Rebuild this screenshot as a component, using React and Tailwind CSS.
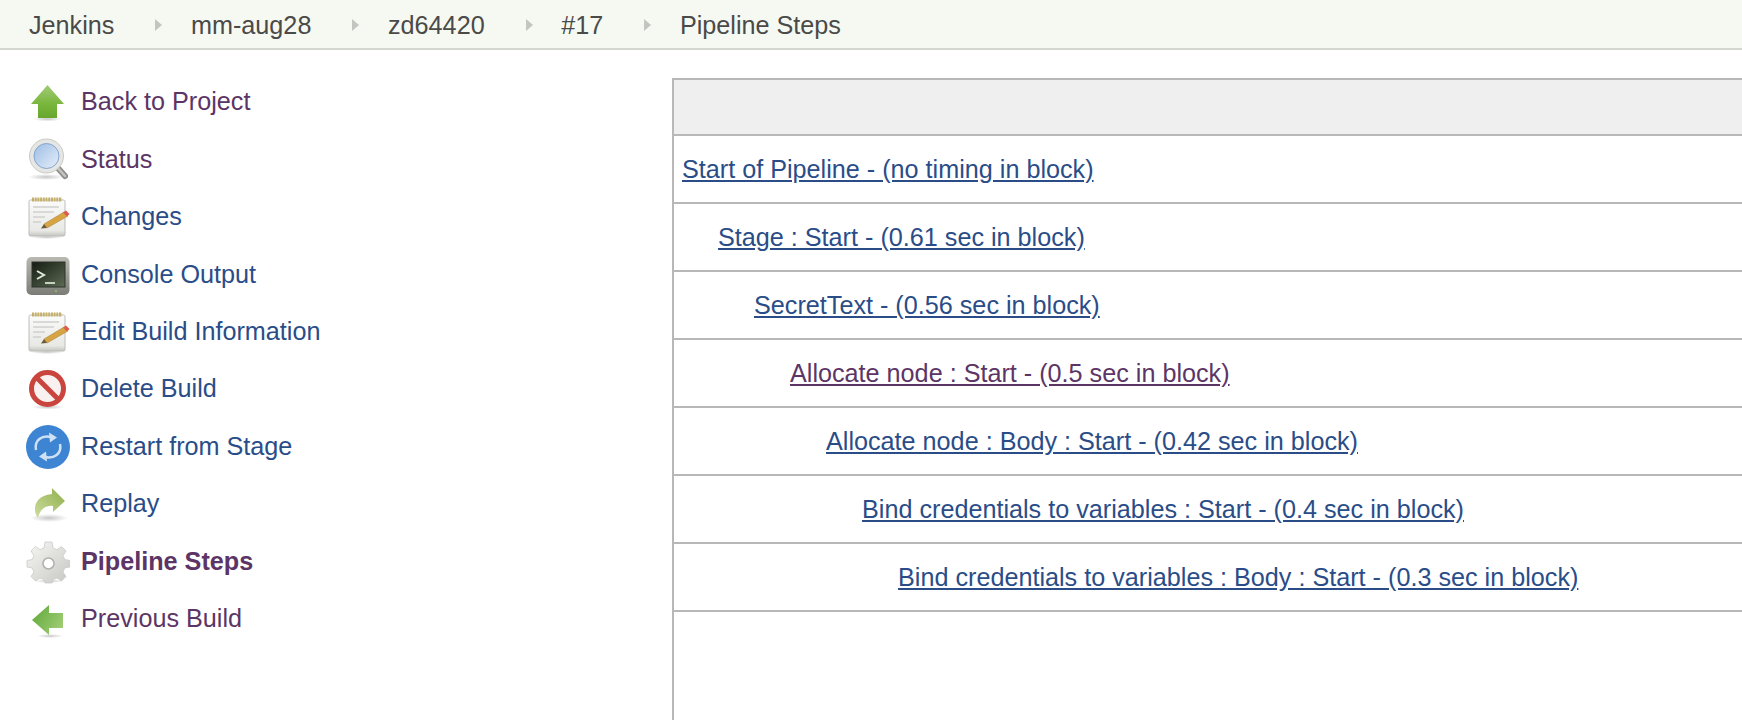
const crumbs = ['Jenkins', 'mm-aug28', 'zd64420', '#17', 'Pipeline Steps']

function Shadow({ cx = 22, cy = 39, rx = 15, ry = 3 }) {
    return <ellipse cx={cx} cy={cy} rx={rx} ry={ry} fill="url(#shadow)" />
}

function Defs() {
    return (
        <svg width="0" height="0" className="absolute">
            <defs>
                <radialGradient id="shadow">
                    <stop offset="0" stopColor="#000" stopOpacity="0.22" />
                    <stop offset="1" stopColor="#000" stopOpacity="0" />
                </radialGradient>
                <linearGradient id="greenUp" x1="0" y1="0" x2="0" y2="1">
                    <stop offset="0" stopColor="#a2cb78" />
                    <stop offset="0.6" stopColor="#78b53b" />
                    <stop offset="1" stopColor="#69a62f" />
                </linearGradient>
                <linearGradient id="greenLeft" x1="0" y1="0" x2="1" y2="0.6">
                    <stop offset="0" stopColor="#5da636" />
                    <stop offset="1" stopColor="#9ccb72" />
                </linearGradient>
                <linearGradient id="lens" x1="0" y1="0" x2="1" y2="1">
                    <stop offset="0" stopColor="#9dbde4" />
                    <stop offset="1" stopColor="#e6effa" />
                </linearGradient>
                <linearGradient id="paper" x1="0" y1="0" x2="0" y2="1">
                    <stop offset="0" stopColor="#fbfbfb" />
                    <stop offset="0.85" stopColor="#e8e8e5" />
                    <stop offset="1" stopColor="#c4c4c0" />
                </linearGradient>
                <linearGradient id="screen" x1="0" y1="0" x2="1" y2="1">
                    <stop offset="0" stopColor="#141c12" />
                    <stop offset="1" stopColor="#5d6b53" />
                </linearGradient>
                <linearGradient id="frame" x1="0" y1="0" x2="0" y2="1">
                    <stop offset="0" stopColor="#b9b9b2" />
                    <stop offset="1" stopColor="#7b7c75" />
                </linearGradient>
                <linearGradient id="replay" x1="0" y1="1" x2="1" y2="0">
                    <stop offset="0" stopColor="#cddd9d" />
                    <stop offset="1" stopColor="#8fae4a" />
                </linearGradient>
                <linearGradient id="gear" x1="0" y1="0" x2="1" y2="1">
                    <stop offset="0" stopColor="#f7f7f5" />
                    <stop offset="1" stopColor="#c6c6c2" />
                </linearGradient>
            </defs>
        </svg>
    )
}

function Icon({ children }) {
    return (
        <svg viewBox="0 0 44 44" className="w-[44px] h-[44px] shrink-0 blur-[0.6px]">
            {children}
        </svg>
    )
}

const ArrowUp = () => (
    <Icon>
        <Shadow cx={21.500} cy={39} rx={14} ry={2.500} />
        <path d="M21.500 5 L38 24 L31 24 L31 38 L12 38 L12 24 L5 24 Z" fill="url(#greenUp)" />
    </Icon>
)

const Search = () => (
    <Icon>
        <Shadow cx={20} cy={39} rx={18} ry={3} />
        <path d="M31 29 L39 38" stroke="#8f8f8d" strokeWidth="6" strokeLinecap="round" />
        <path d="M31 29 L39 38" stroke="#c4c4c2" strokeWidth="2.500" strokeLinecap="round" />
        <circle cx="20.500" cy="18" r="17" fill="#e6e6e4" stroke="#c8c8c6" strokeWidth="1" />
        <circle cx="20.500" cy="18" r="12.500" fill="url(#lens)" stroke="#86a5cd" strokeWidth="1" />
    </Icon>
)

const Notepad = () => (
    <Icon>
        <Shadow cx={21} cy={42} rx={17} ry={2} />
        <rect x="3" y="5" width="36" height="36" rx="1.500" fill="url(#paper)" stroke="#bdbdb8" />
        <path d="M6 4.500 H36" stroke="#c4ae68" strokeWidth="4" strokeDasharray="2 0.700" />
        <path d="M7 12 H33 M7 17 H28 M7 22 H19 M7 27 H15" stroke="#d0d0ce" strokeWidth="1.300" />
        <path d="M18 29 L38 17 L42 21 L21 33 Z" fill="#d6a443" stroke="#a67c30" strokeWidth="0.500" />
        <path d="M18 29 L21 33 L15 33.500 Z" fill="#6b5b3c" />
        <path d="M37 17.500 L40 15.500 L43.500 19 L41 21.500 Z" fill="#dc5c4d" />
    </Icon>
)

const Terminal = () => (
    <Icon>
        <rect x="0.500" y="4" width="43" height="38" rx="5" fill="url(#frame)" />
        <rect x="6" y="9" width="33" height="25" fill="url(#screen)" stroke="#2f332c" />
        <path d="M11 18 L18 22 L11 26" fill="none" stroke="#dfe8d8" strokeWidth="2" />
        <path d="M19 30 H29" stroke="#c6d2bf" strokeWidth="2" />
        <circle cx="30" cy="38" r="1" fill="#8ec65a" />
    </Icon>
)

const NoEntry = () => (
    <Icon>
        <Shadow cx={22} cy={40} rx={16} ry={2.500} />
        <circle cx="21.500" cy="21.500" r="16" fill="#f8f1f0" stroke="#c9453d" strokeWidth="5" />
        <path d="M10 10 L33 33" stroke="#c9453d" strokeWidth="5" />
    </Icon>
)

const Restart = () => (
    <Icon>
        <circle cx="22" cy="22" r="22" fill="#3d85d3" />
        <path d="M10 25 C8 15 16 10 25 12" fill="none" stroke="#cfe1f4" strokeWidth="2.500" />
        <path d="M23 7.500 L31 12.500 L24 17.500 Z" fill="#cfe1f4" />
        <path d="M34 19 C36 29 28 34 19 32" fill="none" stroke="#cfe1f4" strokeWidth="2.500" />
        <path d="M21 36.500 L13 31.500 L20 26.500 Z" fill="#cfe1f4" />
    </Icon>
)

const Replay = () => (
    <Icon>
        <Shadow cx={23} cy={36} rx={19} ry={4} />
        <path d="M26 6 L39 19 L27 30 L27 24 C20 23 14 27 12 36 C7 30 6 14 26 12 Z" fill="url(#replay)" />
    </Icon>
)

const Gear = () => (
    <Icon>
        <Shadow cx={23} cy={41} rx={15} ry={2} />
        <path
            d="M19 2 H26 L27 8 L31 9.700 L35.500 6.500 L40 11 L37 15.500 L38.700 19.500 L44 20.500 V27 L38.700 28 L37 32 L40 36.500 L35.500 41 L31 38 L27 39.500 L26 43 H19 L18 39.500 L14 38 L9.500 41 L5 36.500 L8 32 L6.300 28 L1 27 V20.500 L6.300 19.500 L8 15.500 L5 11 L9.500 6.500 L14 9.700 L18 8 Z"
            fill="url(#gear)"
            stroke="#cacac6"
            strokeWidth="0.800"
        />
        <circle cx="22.500" cy="23.500" r="5.500" fill="#fff" stroke="#b0b0ac" strokeWidth="1.500" />
    </Icon>
)

const ArrowLeft = () => (
    <Icon>
        <Shadow cx={24} cy={39} rx={13} ry={2} />
        <path d="M6 23 L23 8 L23 16 L37 16 L37 31 L23 31 L23 38 Z" fill="url(#greenLeft)" />
    </Icon>
)

const tasks = [
    { label: 'Back to Project', icon: ArrowUp, visited: true },
    { label: 'Status', icon: Search, visited: true },
    { label: 'Changes', icon: Notepad },
    { label: 'Console Output', icon: Terminal },
    { label: 'Edit Build Information', icon: Notepad },
    { label: 'Delete Build', icon: NoEntry },
    { label: 'Restart from Stage', icon: Restart },
    { label: 'Replay', icon: Replay },
    { label: 'Pipeline Steps', icon: Gear, visited: true, bold: true },
    { label: 'Previous Build', icon: ArrowLeft, visited: true },
]

const steps = [
    { label: 'Start of Pipeline - (no timing in block)', indent: 'pl-[8px]' },
    { label: 'Stage : Start - (0.61 sec in block)', indent: 'pl-[44px]' },
    { label: 'SecretText - (0.56 sec in block)', indent: 'pl-[80px]' },
    { label: 'Allocate node : Start - (0.5 sec in block)', indent: 'pl-[116px]', visited: true },
    { label: 'Allocate node : Body : Start - (0.42 sec in block)', indent: 'pl-[152px]' },
    { label: 'Bind credentials to variables : Start - (0.4 sec in block)', indent: 'pl-[188px]' },
    { label: 'Bind credentials to variables : Body : Start - (0.3 sec in block)', indent: 'pl-[224px]' },
]

export default function App() {
    return (
        <div className="h-[720px] overflow-hidden bg-white font-['Liberation_Sans',Arial,sans-serif] text-[25.2px]">
            <Defs />
            <div className="h-[50px] flex items-center pl-[29px] pt-[3px] bg-[#f6f9f2] border-b-2 border-[#d3d7cf] text-[#4a4a48]">
                {crumbs.map((crumb, i) => (
                    <div key={crumb} className="flex items-center">
                        <span>{crumb}</span>
                        {i < crumbs.length - 1 && (
                            <span className="ml-[41px] mr-[28.6px] w-0 h-0 border-y-[6px] border-y-transparent border-l-[7px] border-l-[#c4c4c0]" />
                        )}
                    </div>
                ))}
            </div>
            <div className="flex h-[670px]">
                <div className="w-[672px] shrink-0 pt-[23.7px] pl-[26px]">
                    {tasks.map((task) => {
                        const TaskIcon = task.icon
                        return (
                            <div key={task.label} className="h-[57.4px] flex items-center gap-[11px]">
                                <TaskIcon />
                                <a className={`${task.visited ? 'text-[#5c3566]' : 'text-[#2a4d88]'} ${task.bold ? 'font-bold' : ''}`}>
                                    {task.label}
                                </a>
                            </div>
                        )
                    })}
                </div>
                <div className="flex-1 mt-[28px] border-l-2 border-[#b8b8b8]">
                    <div className="h-[58px] bg-[#efefef] border-y-2 border-[#b8b8b8]" />
                    {steps.map((step) => (
                        <div key={step.label} className={`h-[68px] flex items-center pt-[2px] border-b-2 border-[#b8b8b8] ${step.indent}`}>
                            <a className={`underline ${step.visited ? 'text-[#5c3566]' : 'text-[#2a4d88]'}`}>{step.label}</a>
                        </div>
                    ))}
                </div>
            </div>
        </div>
    )
}
